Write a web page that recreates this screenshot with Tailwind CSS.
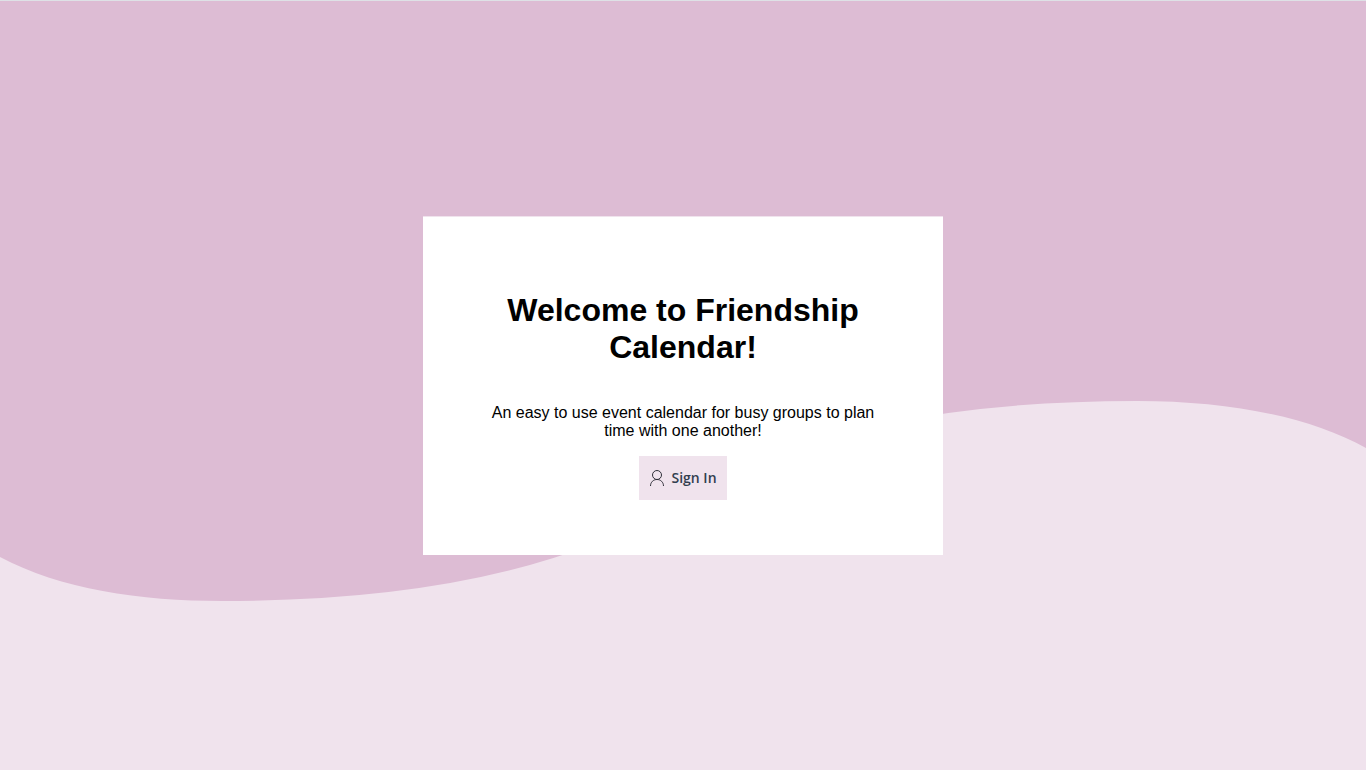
<!DOCTYPE html>
<html lang="en">
<head>
<meta charset="utf-8">
<meta name="viewport" content="width=device-width, initial-scale=1">
<title>Friendship Calendar</title>
<script src="https://cdn.jsdelivr.net/npm/@tailwindcss/browser@4"></script>
</head>
<body class="relative isolate flex min-h-screen items-center justify-center border-t border-[#dee1e6] bg-[#ddbcd4] font-['Liberation_Sans',Arial,sans-serif] text-black">
  <svg class="absolute inset-0 -z-10 h-full w-full" viewBox="0 0 1366 769" preserveAspectRatio="none" aria-hidden="true">
    <path fill="#f0e3ed" d="M0 556C60 588 140 600 222 600Q520 600 680 500Q840 400 1137 400C1230 400 1310 416 1366 447V769H0Z"/>
  </svg>
  <main class="flex w-full max-w-[520px] flex-col items-center border-t border-[#f0e3ed] bg-white px-15 pt-[75px] pb-[55px] text-center">
    <h1 class="text-[32px] leading-[37px] font-bold">Welcome to Friendship Calendar!</h1>
    <p class="mt-[38px] text-base leading-[18px]">An easy to use event calendar for busy groups to plan time with one another!</p>
    <button type="button" class="mt-4 flex h-11 items-center gap-1.5 bg-[#f0e3ed] px-2.5 font-['Open_Sans','Noto_Sans',sans-serif] text-sm font-semibold text-[#323e4f]">
      <svg class="size-4" viewBox="0 0 16 16" fill="none" stroke="#30303a" stroke-width="1" aria-hidden="true">
        <circle cx="8" cy="5" r="4.5"/>
        <path d="M1.500 16C1.500 12.200 4.400 9.500 8 9.500S14.500 12.200 14.500 16"/>
      </svg>
      Sign In
    </button>
  </main>
</body>
</html>
